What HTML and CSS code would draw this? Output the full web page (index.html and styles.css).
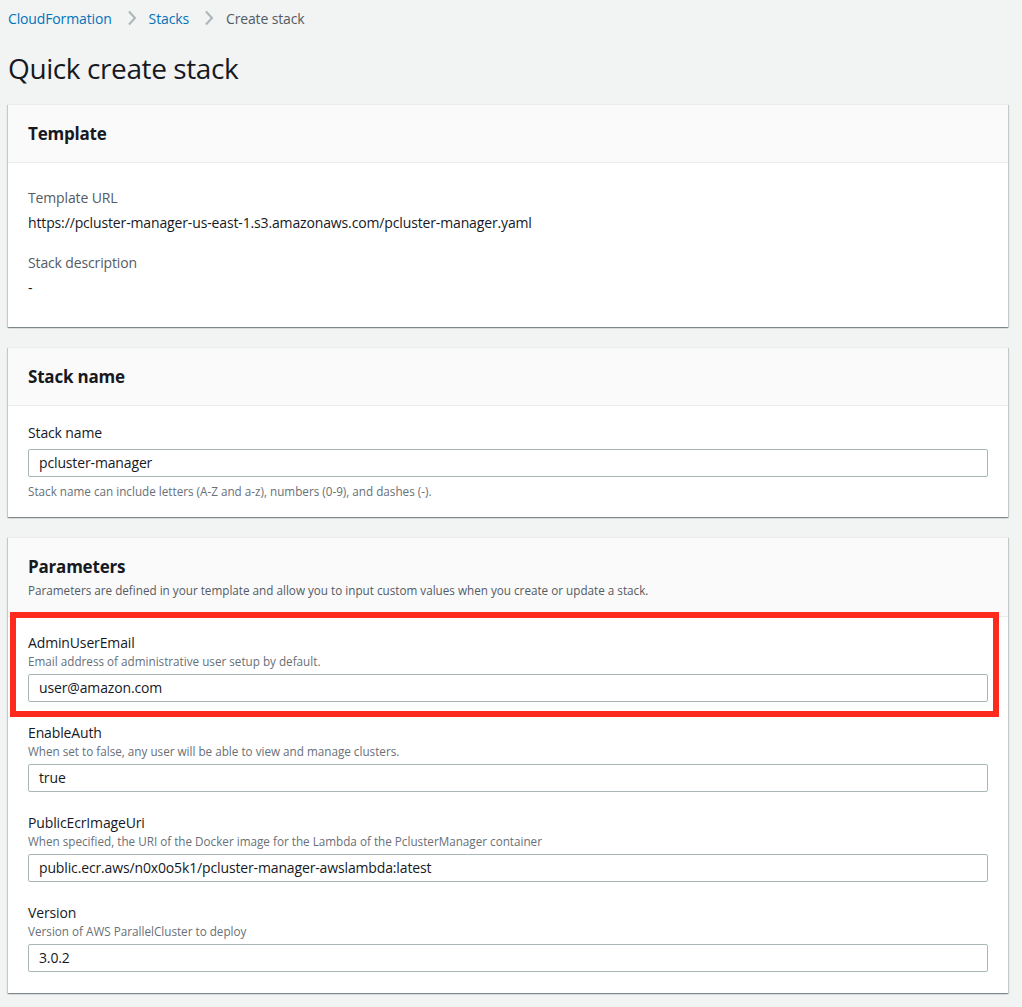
FILE: index.html
```html
<!DOCTYPE html>
<html lang="en">
<head>
<meta charset="utf-8">
<title>Quick create stack</title>
<link rel="stylesheet" href="styles.css">
</head>
<body>
<div class="page">
  <nav class="crumbs">
    <a class="crumb-link" href="#">CloudFormation</a>
    <svg class="chev" viewBox="0 0 10 16" width="10" height="16"><path d="M2 1.5 L8 8 L2 14.5" fill="none" stroke="#aab7b8" stroke-width="2"/></svg>
    <a class="crumb-link" href="#">Stacks</a>
    <svg class="chev" viewBox="0 0 10 16" width="10" height="16"><path d="M2 1.5 L8 8 L2 14.5" fill="none" stroke="#aab7b8" stroke-width="2"/></svg>
    <span class="crumb-current">Create stack</span>
  </nav>
  <h1 class="title">Quick create stack</h1>

  <section class="card">
    <div class="card-head"><h2 class="card-title">Template</h2></div>
    <div class="card-body tpl-body">
      <div class="kv-key">Template URL</div>
      <div class="kv-val">https://pcluster-manager-us-east-1.s3.amazonaws.com/pcluster-manager.yaml</div>
      <div class="kv-key kv-gap">Stack description</div>
      <div class="kv-val">-</div>
    </div>
  </section>

  <section class="card">
    <div class="card-head"><h2 class="card-title">Stack name</h2></div>
    <div class="card-body name-body">
      <label class="label">Stack name</label>
      <div class="input name-input">pcluster-manager</div>
      <div class="hint">Stack name can include letters (A-Z and a-z), numbers (0-9), and dashes (-).</div>
    </div>
  </section>

  <section class="card">
    <div class="card-head params-head">
      <h2 class="card-title">Parameters</h2>
      <div class="head-desc">Parameters are defined in your template and allow you to input custom values when you create or update a stack.</div>
    </div>
    <div class="card-body params-body">
      <div class="field">
        <div class="label">AdminUserEmail</div>
        <div class="desc">Email address of administrative user setup by default.</div>
        <div class="input">user@amazon.com</div>
        <div class="redbox"></div>
      </div>
      <div class="field">
        <div class="label">EnableAuth</div>
        <div class="desc">When set to false, any user will be able to view and manage clusters.</div>
        <div class="input">true</div>
      </div>
      <div class="field">
        <div class="label">PublicEcrImageUri</div>
        <div class="desc">When specified, the URI of the Docker image for the Lambda of the PclusterManager container</div>
        <div class="input">public.ecr.aws/n0x0o5k1/pcluster-manager-awslambda:latest</div>
      </div>
      <div class="field">
        <div class="label">Version</div>
        <div class="desc">Version of AWS ParallelCluster to deploy</div>
        <div class="input">3.0.2</div>
      </div>
    </div>
  </section>
</div>
</body>
</html>
```

FILE: styles.css
```css
html, body {
  margin: 0;
  padding: 0;
  background: #f2f3f3;
}
body {
  font-family: "Open Sans", "Noto Sans", Arial, sans-serif;
  color: #16191f;
  font-size: 14px;
  letter-spacing: -0.14px;
}
.page {
  width: 1000px;
  padding: 0 0 20px 8px;
}
.crumbs {
  display: flex;
  align-items: center;
  height: 36px;
  font-size: 14px;
}
.crumb-link {
  color: #0073bb;
  text-decoration: none;
}
.chev {
  margin: 0 12px 0 15px;
}
.crumb-current {
  color: #545b64;
}
.title {
  margin: 0;
  font-size: 28px;
  font-weight: 400;
  letter-spacing: -0.4px;
  line-height: 36px;
  padding: 14px 0 18px;
}
.card {
  background: #fff;
  border-top: 1px solid #eaeded;
  box-shadow: 0 1px 1px 0 rgba(0,28,36,.3), 1px 1px 1px 0 rgba(0,28,36,.15), -1px 1px 1px 0 rgba(0,28,36,.15);
  margin-bottom: 20px;
  position: relative;
}
.card-head {
  background: #fafafa;
  border-bottom: 1px solid #eaeded;
  height: 58px;
  display: flex;
  align-items: center;
  padding: 0 20px;
  box-sizing: border-box;
}
.card-title {
  margin: 0;
  font-size: 17px;
  font-weight: 700;
  letter-spacing: -0.2px;
  line-height: 22px;
}
.params-head {
  height: auto;
  display: block;
  padding: 18px 20px 18px;
}
.head-desc {
  font-size: 11.7px;
  letter-spacing: 0;
  line-height: 16px;
  color: #545b64;
  margin-top: 4px;
}
.card-body {
  padding: 0 20px;
}
.tpl-body {
  padding-top: 25px;
  padding-bottom: 29px;
}
.kv-key {
  color: #545b64;
  line-height: 20px;
}
.kv-val {
  line-height: 20px;
  margin-top: 5px;
}
.kv-gap {
  margin-top: 20px;
}
.name-body {
  padding-top: 17px;
  padding-bottom: 18px;
}
.label {
  display: block;
  line-height: 20px;
}
.name-input {
  margin-top: 6px;
}
.hint {
  font-size: 11.7px;
  letter-spacing: 0;
  line-height: 16px;
  color: #687078;
  margin-top: 6px;
}
.input {
  height: 28px;
  box-sizing: border-box;
  border: 1px solid #aab7b8;
  border-radius: 2px;
  background: #fff;
  padding: 0 10px;
  display: flex;
  align-items: center;
  line-height: 20px;
}
.params-body {
  padding-top: 16px;
  padding-bottom: 21px;
  display: flex;
  flex-direction: column;
  gap: 21px;
}
.field {
  position: relative;
}
.desc {
  font-size: 11.7px;
  letter-spacing: 0;
  line-height: 16px;
  color: #687078;
  margin-bottom: 5px;
}
.redbox {
  position: absolute;
  left: -18px;
  right: -11px;
  top: -21px;
  bottom: -15px;
  border: 6px solid #fe2a1e;
  pointer-events: none;
}
```
